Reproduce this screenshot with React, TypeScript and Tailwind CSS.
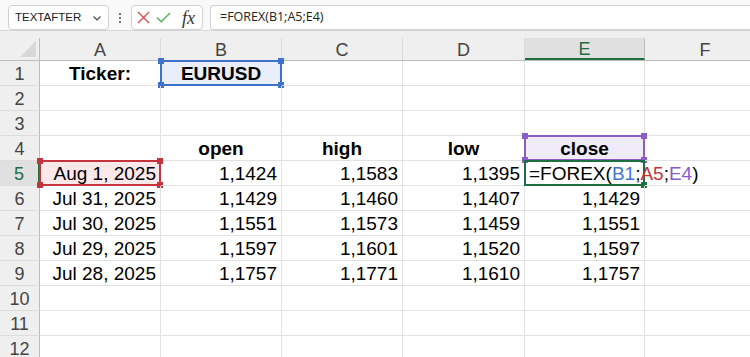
import React from "react";

const COLS = ["A", "B", "C", "D", "E", "F"];
const WIDTHS = [121, 121, 121, 122, 120, 121];

type Sel = { color: string; fill?: string; handles: "all" | "br" };

type Cell = {
  text?: React.ReactNode;
  align?: "left" | "center" | "right";
  bold?: boolean;
  sel?: Sel;
};

const blue: Sel = { color: "#3f72cc", fill: "#e9eef8", handles: "all" };
const red: Sel = { color: "#c4343c", fill: "#fbe8e9", handles: "all" };
const purple: Sel = { color: "#8a5cc6", fill: "#efebf8", handles: "all" };
const green: Sel = { color: "#1e6e42", handles: "br" };

const formula = (
  <span>
    =FOREX(<span className="text-[#3f76d0]">B1</span>;
    <span className="text-[#c4343c]">A5</span>;
    <span className="text-[#8a5cc6]">E4</span>)
  </span>
);

const dataRows: [string, string, string, string, string][] = [
  ["Aug 1, 2025", "1,1424", "1,1583", "1,1395", ""],
  ["Jul 31, 2025", "1,1429", "1,1460", "1,1407", "1,1429"],
  ["Jul 30, 2025", "1,1551", "1,1573", "1,1459", "1,1551"],
  ["Jul 29, 2025", "1,1597", "1,1601", "1,1520", "1,1597"],
  ["Jul 28, 2025", "1,1757", "1,1771", "1,1610", "1,1757"],
];

function buildRows(): Cell[][] {
  const rows: Cell[][] = [];
  for (let i = 0; i < 12; i++) rows.push(COLS.map(() => ({})));
  rows[0][0] = { text: "Ticker:", align: "center", bold: true };
  rows[0][1] = { text: "EURUSD", align: "center", bold: true, sel: blue };
  ["open", "high", "low", "close"].forEach((t, i) => {
    rows[3][i + 1] = { text: t, align: "center", bold: true };
  });
  rows[3][4].sel = purple;
  dataRows.forEach((r, i) => {
    r.forEach((v, j) => {
      rows[4 + i][j] = { text: v || undefined, align: "right" };
    });
  });
  rows[4][0].sel = red;
  rows[4][4] = { text: formula, align: "left", sel: green };
  return rows;
}

function Handle({ pos, color }: { pos: string; color: string }) {
  return (
    <span
      className={`absolute w-[6px] h-[6px] ${pos}`}
      style={{ backgroundColor: color }}
    />
  );
}

function Selection({ sel }: { sel: Sel }) {
  return (
    <div
      className="absolute left-[-1px] top-[-1px] right-[-1px] bottom-[-1px] border-2 z-0"
      style={{ borderColor: sel.color, backgroundColor: sel.fill || "transparent" }}
    >
      {sel.handles === "all" && (
        <>
          <Handle pos="left-[-4px] top-[-4px]" color={sel.color} />
          <Handle pos="right-[-4px] top-[-4px]" color={sel.color} />
          <Handle pos="left-[-4px] bottom-[-4px]" color={sel.color} />
        </>
      )}
      <Handle pos="right-[-4px] bottom-[-4px]" color={sel.color} />
    </div>
  );
}

export default function App() {
  const rows = buildRows();
  return (
    <div className="w-[750px] h-[357px] overflow-hidden bg-white font-['Liberation_Sans',Arial,sans-serif] text-black">
      {/* Toolbar */}
      <div className="h-[30px] flex items-end bg-[#f9f9f9] pl-[8px] gap-0">
        <div className="w-[101px] h-[25px] bg-white border border-[#d1d1d1] rounded-[4px] flex items-center justify-between pl-[6px] pr-[6px] font-['Liberation_Sans',Arial,sans-serif] text-[11.5px] text-[#222]">
          <span>TEXTAFTER</span>
          <svg width="10" height="10" viewBox="0 0 10 10">
            <path d="M1.5 3.5 L5 7 L8.5 3.5" fill="none" stroke="#444" strokeWidth="1.1" />
          </svg>
        </div>
        <div className="w-[22px] h-[25px] flex flex-col items-center justify-center gap-[2px]">
          <span className="w-[2px] h-[2px] bg-[#444] rounded-full" />
          <span className="w-[2px] h-[2px] bg-[#444] rounded-full" />
          <span className="w-[2px] h-[2px] bg-[#444] rounded-full" />
        </div>
        <div className="w-[72px] h-[25px] bg-white border border-[#d1d1d1] rounded-[4px] flex items-center pl-[5px]">
          <svg width="13" height="13" viewBox="0 0 13 13">
            <path d="M1 1 L12 12 M12 1 L1 12" stroke="#e0454b" strokeWidth="1.3" fill="none" />
          </svg>
          <svg className="ml-[6px]" width="15" height="13" viewBox="0 0 15 13">
            <path d="M1 6.5 L5.2 10.8 L14 2" stroke="#4caf5a" strokeWidth="1.3" fill="none" />
          </svg>
          <span className="ml-[11px] font-['Liberation_Serif',serif] italic text-[18px] text-[#333] leading-none">
            fx
          </span>
        </div>
        <div className="flex-1 ml-[7px] h-[25px] bg-white border-y border-l border-[#d1d1d1] rounded-l-[4px] flex items-center pl-[9px] font-['Open_Sans',sans-serif] text-[12.5px] text-[#222]">
          =FOREX(B1;A5;E4)
        </div>
      </div>
      <div className="h-[8px] bg-[#efefef] border-t border-[#d6d6d6]" />

      {/* Column headers */}
      <div className="flex h-[23px] bg-[#efefef] border-b border-[#bdbdbd]">
        <div className="w-[40px] shrink-0 relative border-r border-[#bdbdbd]">
          <svg className="absolute right-[3px] bottom-[3px]" width="16" height="16" viewBox="0 0 16 16">
            <path d="M16 0 L16 16 L0 16 Z" fill="#d8d8d8" />
          </svg>
        </div>
        {COLS.map((c, i) => (
          <div
            key={c}
            className={`shrink-0 flex items-center justify-center pt-[2px] text-[18px] border-r ${
              c === "E"
                ? "bg-[#e0e0e0] text-[#1e6e42] border-[#bdbdbd] border-b-2 border-b-[#1e6e42]"
                : "text-[#444] border-[#dcdcdc]"
            }`}
            style={{ width: WIDTHS[i] }}
          >
            {c}
          </div>
        ))}
      </div>

      {/* Rows */}
      {rows.map((row, ri) => (
        <div key={ri} className="flex h-[25px]">
          <div
            className={`w-[40px] shrink-0 flex items-center justify-center pt-[2px] text-[18px] border-b border-[#dcdcdc] ${
              ri === 4
                ? "bg-[#e0e0e0] text-[#1e6e42] border-r-2 border-r-[#1e6e42]"
                : "bg-[#efefef] text-[#444] border-r border-r-[#bdbdbd]"
            }`}
          >
            {ri + 1}
          </div>
          {row.map((cell, ci) => (
            <div
              key={ci}
              className={`relative shrink-0 border-r border-b border-[#e1e1e1] flex items-center px-[4px] pt-[3px] text-[19px] whitespace-nowrap ${
                cell.align === "center"
                  ? "justify-center"
                  : cell.align === "right"
                  ? "justify-end"
                  : "justify-start"
              } ${cell.bold ? "font-bold" : ""}`}
              style={{ width: WIDTHS[ci] }}
            >
              {cell.sel && <Selection sel={cell.sel} />}
              {cell.text !== undefined && (
                <span className="relative z-10">{cell.text}</span>
              )}
            </div>
          ))}
        </div>
      ))}
    </div>
  );
}
